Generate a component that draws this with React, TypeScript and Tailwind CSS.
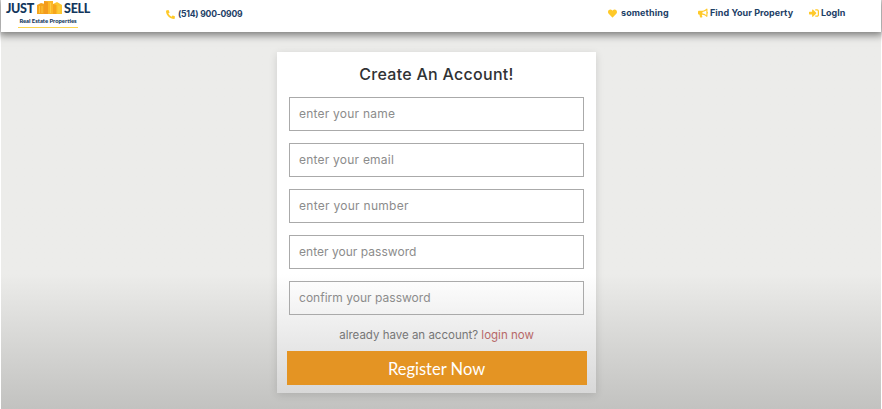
import { FaBullhorn, FaHeart, FaPhoneAlt, FaSignInAlt } from "react-icons/fa";

const fields = [
  { type: "text", label: "enter your name", spacing: "tracking-[0.22px]" },
  { type: "email", label: "enter your email", spacing: "tracking-[0.22px]" },
  { type: "text", label: "enter your number", spacing: "tracking-[0.28px]" },
  { type: "password", label: "enter your password", spacing: "tracking-[0.03px]" },
  { type: "password", label: "confirm your password", spacing: "tracking-[0.02px]" },
];

function Logo() {
  return (
    <a className="flex h-[29px] w-[86px] flex-col items-center text-[#12365c]">
      <span className="flex h-[15px] w-full items-center justify-between px-px font-[Lato,sans-serif] text-[12.5px] leading-[15px] font-black whitespace-nowrap">
        <span className="w-[29px] pt-px tracking-[-0.3px]">JUST</span>
        <svg className="h-[14px] w-[25px] shrink-0" viewBox="0 0 25 14">
          <path d="M0 4l4-2 4 1v10H0z" fill="#f5a51d" />
          <path d="M7 0h9v13H7z" fill="#fcb827" />
          <path d="M7 0l4 1v12H7z" fill="#f39b1d" />
          <path d="M16 3l4-2 5 3v9h-9z" fill="#fcc62f" />
          <path d="M16 3l3.500 1v9H16z" fill="#f5a51d" />
          <path d="M2.500 5v7M5 5v7M13.500 2v10M22 5v7" stroke="#ffd650" strokeWidth=".7" />
        </svg>
        <span className="pt-px tracking-[-0.3px]">SELL</span>
      </span>
      <span className="mt-[2px] font-[Lato,sans-serif] text-[5.8px] leading-[8px] font-black whitespace-nowrap">
        Real Estate Properties
      </span>
      <span className="mt-[2px] h-px w-[60px] shrink-0 bg-[#fbd44f]" />
    </a>
  );
}

export default function App() {
  return (
    <div className="flex h-[409px] w-[882px] flex-col overflow-hidden bg-white px-px font-[Inter,sans-serif]">
      <header className="relative z-10 flex h-[32px] shrink-0 items-start bg-white pl-[4px] text-[9px] font-bold text-[#1d4066] shadow-[0_1px_8px_2px_rgba(0,0,0,0.5)]">
        <Logo />
        <a className="mt-[8px] ml-[75px] flex h-[12px] w-[78px] items-center gap-[3px] whitespace-nowrap">
          <FaPhoneAlt className="size-[9px] shrink-0 text-[#ffc928]" />
          <span className="text-[8.6px] tracking-[-0.22px]">(514) 900-0909</span>
        </a>
        <nav className="mt-[7px] ml-[364px] flex h-[12px] items-center whitespace-nowrap">
          <a className="flex w-[90px] items-center gap-[4px]">
            <FaHeart className="size-[9px] shrink-0 text-[#ffc928]" />
            <span className="tracking-[0.1px]">something</span>
          </a>
          <a className="flex w-[111px] items-center gap-[2px]">
            <FaBullhorn className="size-[10px] shrink-0 text-[#ffc928]" />
            <span className="tracking-[0.05px]">Find Your Property</span>
          </a>
          <a className="flex items-center gap-[2px]">
            <FaSignInAlt className="size-[10px] shrink-0 text-[#ffc928]" />
            <span>LogIn</span>
          </a>
        </nav>
      </header>

      <main className="flex flex-1 justify-center bg-linear-to-b from-[#ececea] from-[242px] to-[#c2c2c0] pt-[20px] pr-[9px]">
        <form className="flex h-[341px] w-[319px] flex-col items-center bg-linear-to-b from-white from-[222px] to-[#d8d8d8] px-[10px] shadow-[0_2px_8px_rgba(0,0,0,0.13)]">
          <h1 className="mt-[12px] h-[21px] text-[16px] leading-[21px] font-medium tracking-[0.28px] whitespace-nowrap text-[#303234]">
            Create An Account!
          </h1>
          <div className="mt-[12px] flex flex-col gap-[12px]">
            {fields.map((field) => (
              <input
                key={field.label}
                type={field.type}
                placeholder={field.label}
                className={`block h-[34px] w-[295px] border border-[#aaaaaa] bg-transparent px-[9px] pb-[1px] text-[12px] outline-none placeholder:text-[#8c8c8c] ${field.spacing}`}
              />
            ))}
          </div>
          <p className="mt-[12px] h-[17px] text-[11.5px] leading-[17px] whitespace-nowrap text-[#777777]">
            already have an account? <a className="text-[#b76868]">login now</a>
          </p>
          <button
            type="button"
            className="mt-[7px] h-[34px] w-[300px] shrink-0 bg-[#e49423] pt-[2px] font-[Lato,sans-serif] text-[16.5px] text-white"
          >
            Register Now
          </button>
        </form>
      </main>
    </div>
  );
}
